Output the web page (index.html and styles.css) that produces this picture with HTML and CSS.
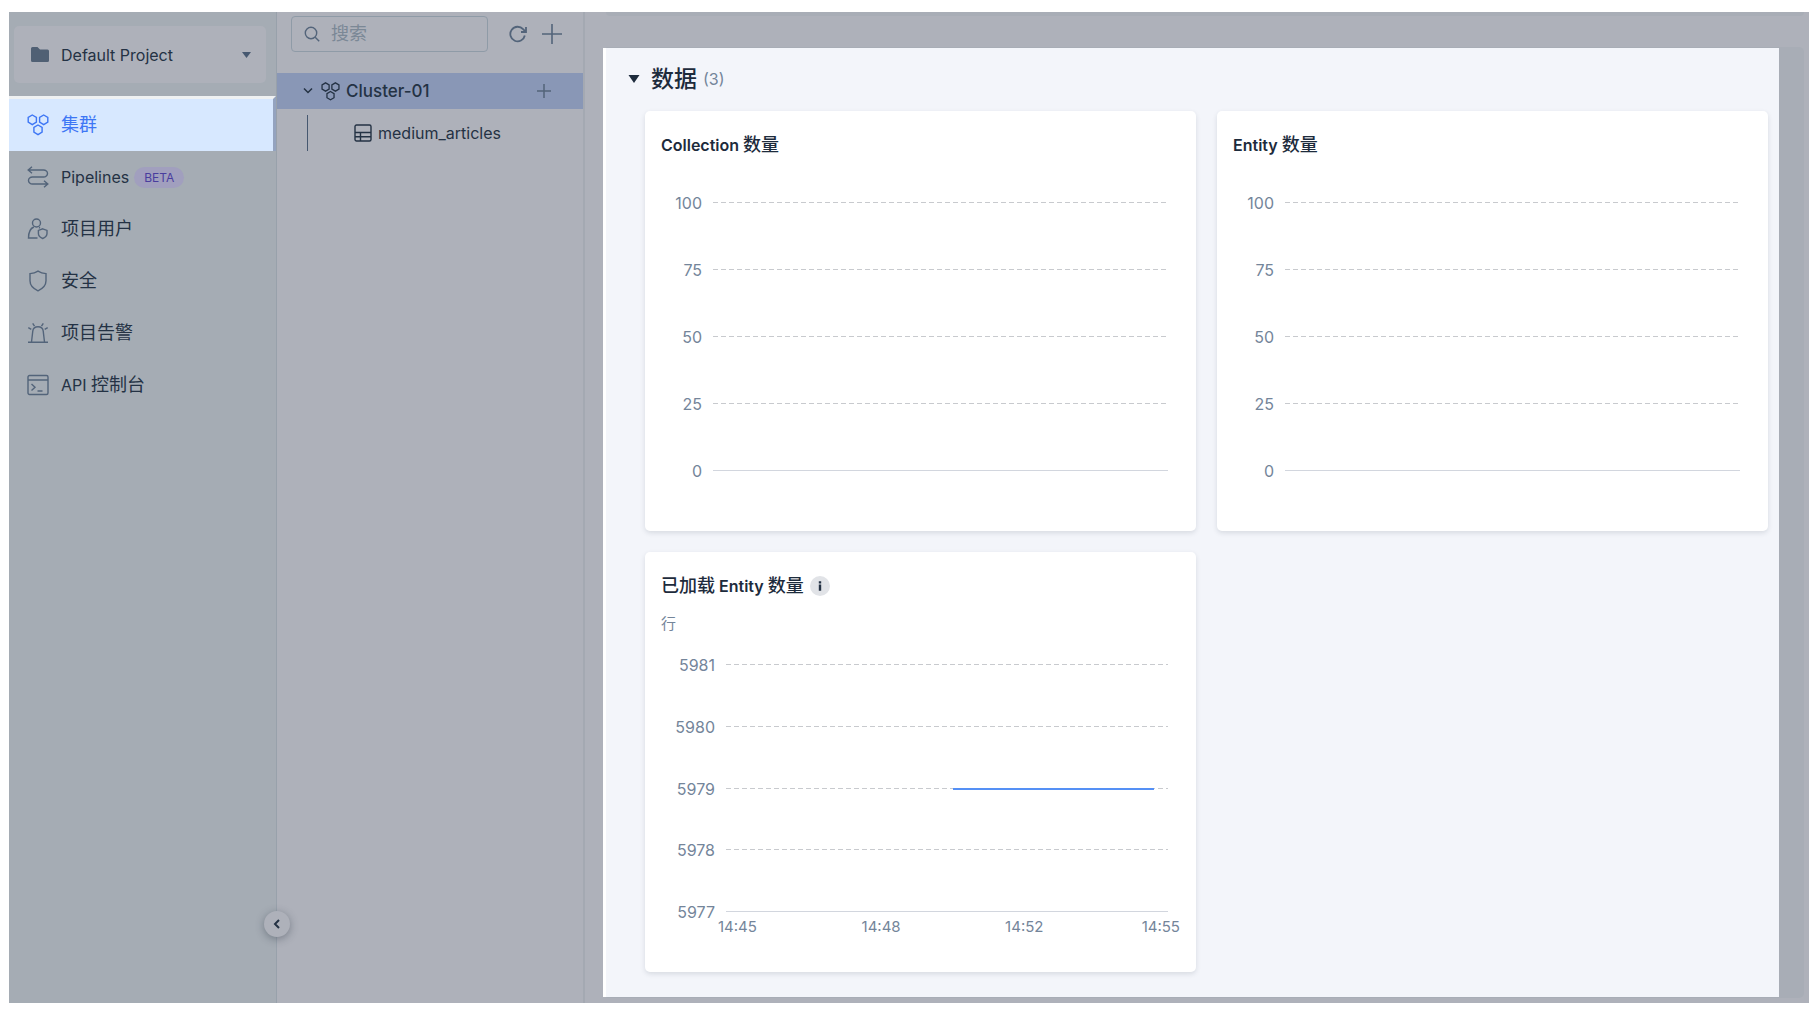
FILE: index.html
```html
<!DOCTYPE html>
<html lang="zh-CN">
<head>
<meta charset="utf-8">
<meta name="viewport" content="width=device-width, initial-scale=1">
<title>Cluster-01</title>
<link rel="stylesheet" href="styles.css">
</head>
<body>
<svg class="defs" aria-hidden="true">
  <symbol id="hexes" viewBox="0 0 22 22">
    <path d="M5.3 1 9.4 3.4v4.8L5.3 10.600 1.200 8.200V3.400zM16.700 1l4.100 2.400v4.800l-4.100 2.400-4.100-2.400V3.400zM11 11l4.100 2.400v4.800L11 20.600l-4.100-2.400v-4.800z"/>
  </symbol>
</svg>
<div class="app">
  <aside class="sidebar">
    <button class="project" type="button">
      <svg class="folder" viewBox="0 0 18 15"><path d="M0 1.500Q0 0 1.500 0h5L9 2.500h7.500Q18 2.500 18 4v9.500Q18 15 16.500 15h-15Q0 15 0 13.500z"/></svg>
      <span class="project-name">Default Project</span>
      <svg class="caret" viewBox="0 0 9 6"><path d="M0 0h9L4.500 6z"/></svg>
    </button>
    <nav class="nav">
      <a class="nav-item active" href="#clusters"><svg class="icon" viewBox="0 0 22 22"><use href="#hexes"/></svg><span class="cjk">集群</span></a>
      <a class="nav-item" href="#pipelines"><svg class="icon" viewBox="0 0 22 22"><path d="M5 .8 1.200 4 5 7.200M1.500 4h15a4 3.500 0 0 1 0 7h-11a4 3.500 0 0 0 0 7h15M17 14.800l3.800 3.200-3.800 3.200"/></svg><span>Pipelines</span><span class="badge">BETA</span></a>
      <a class="nav-item" href="#users"><svg class="icon" viewBox="0 0 22 22"><circle cx="9.500" cy="5" r="4"/><path d="M10.500 20H1.500c0-6 1.700-9.500 5.300-11M12 9.500l1 .5M15.700 10.800l4.300 1.600v3.200c0 2.300-1.800 3.900-4.300 4.900-2.500-1-4.300-2.600-4.300-4.900v-3.200z"/></svg><span class="cjk">项目用户</span></a>
      <a class="nav-item" href="#security"><svg class="icon" viewBox="0 0 22 22"><path d="M11 1.200c2.600 1.700 5.300 2.300 8 2.400v7.200c0 4.400-2.900 7.700-8 10-5.100-2.300-8-5.600-8-10V3.600c2.700-.1 5.400-.7 8-2.400z"/></svg><span class="cjk">安全</span></a>
      <a class="nav-item" href="#alerts"><svg class="icon" viewBox="0 0 22 22"><path d="M1 20.200h20M4.500 20l1.300-11q.5-4.300 5.200-4.300T16.200 9l1.300 11M1.300 5.600l3 1.700M20.700 5.600l-3 1.700M5.700 1.300l1.800 2.800M16.300 1.300l-1.800 2.800"/></svg><span class="cjk">项目告警</span></a>
      <a class="nav-item" href="#api"><svg class="icon" viewBox="0 0 22 22"><rect x="1" y="1.500" width="20" height="19" rx="1.500"/><path d="M1 6h20M4.500 10l3.500 3.300-3.500 3.300M10.500 17h5"/></svg><span>API <span class="cjk">控制台</span></span></a>
    </nav>
    <button class="collapse" type="button" aria-label="收起"><svg viewBox="0 0 8 10"><path d="M6 1 2 5l4 4"/></svg></button>
  </aside>

  <section class="tree">
    <div class="tools">
      <label class="search">
        <svg viewBox="0 0 16 16"><circle cx="7" cy="7" r="5.700"/><path d="m11.200 11.200 4 4"/></svg>
        <input type="search" placeholder="搜索" aria-label="搜索">
      </label>
      <button class="tool" type="button" aria-label="刷新"><svg class="refresh" viewBox="0 0 18 18"><path d="M15.800 10.500a7.300 7.300 0 1 1-1.700-6.300L16.500 6.700M17 2v5h-5"/></svg></button>
      <button class="tool" type="button" aria-label="新建"><svg class="plus" viewBox="0 0 20 20"><path d="M10 0v20M0 10h20"/></svg></button>
    </div>
    <div class="cluster">
      <svg class="chevron" viewBox="0 0 10 8"><path d="m1 1.500 4 4 4-4"/></svg>
      <svg class="hexes" viewBox="0 0 22 22"><use href="#hexes"/></svg>
      <a class="cluster-name" href="#cluster-01">Cluster-01</a>
      <button class="add" type="button" aria-label="新建 Collection"><svg viewBox="0 0 14 14"><path d="M7 0v14M0 7h14"/></svg></button>
    </div>
    <div class="children">
      <a class="collection" href="#medium_articles"><svg viewBox="0 0 18 18"><rect x="1" y="1" width="16" height="16" rx="1.500"/><path d="M1 8.500h16M1 12.700h16M6.500 8.500V17"/></svg>medium_articles</a>
    </div>
  </section>

  <main class="main">
    <div class="previous"></div>
    <div class="panel">
      <section class="metrics">
        <h2 class="heading"><button class="toggle" type="button"><svg viewBox="0 0 12 8"><path d="M.5 0h11L6 8z"/></svg><span class="heading-text">数据</span><span class="count">(3)</span></button></h2>
        <div class="cards">
          <article class="card">
            <h3 class="title">Collection <span class="cjk">数量</span></h3>
            <div class="plot">
              <div class="row"><span class="tick">100</span><i class="line"></i></div>
              <div class="row"><span class="tick">75</span><i class="line"></i></div>
              <div class="row"><span class="tick">50</span><i class="line"></i></div>
              <div class="row"><span class="tick">25</span><i class="line"></i></div>
              <div class="row"><span class="tick">0</span><i class="line base"></i></div>
            </div>
          </article>
          <article class="card">
            <h3 class="title">Entity <span class="cjk">数量</span></h3>
            <div class="plot">
              <div class="row"><span class="tick">100</span><i class="line"></i></div>
              <div class="row"><span class="tick">75</span><i class="line"></i></div>
              <div class="row"><span class="tick">50</span><i class="line"></i></div>
              <div class="row"><span class="tick">25</span><i class="line"></i></div>
              <div class="row"><span class="tick">0</span><i class="line base"></i></div>
            </div>
          </article>
          <article class="card loaded">
            <h3 class="title"><span class="cjk">已加载</span> Entity <span class="cjk">数量</span><span class="info"><svg viewBox="0 0 20 20"><path d="M8.800 5.300h2.400v2.200H8.800zM8.800 8.500h2.400v6.200H8.800z"/></svg></span></h3>
            <p class="unit">行</p>
            <div class="plot">
              <div class="row"><span class="tick">5981</span><i class="line"></i></div>
              <div class="row"><span class="tick">5980</span><i class="line"></i></div>
              <div class="row"><span class="tick">5979</span><i class="line"><b class="series" style="left:51.400%;width:45.500%"></b></i></div>
              <div class="row"><span class="tick">5978</span><i class="line"></i></div>
              <div class="row"><span class="tick">5977</span><i class="line base"></i></div>
            </div>
            <div class="times"><span>14:45</span><span>14:48</span><span>14:52</span><span>14:55</span></div>
          </article>
        </div>
      </section>
    </div>
  </main>
</div>
</body>
</html>
```
FILE: styles.css
```css
* { box-sizing: border-box; }

body {
  margin: 0;
  padding: 12px 9px;
  background: #fff;
  color: #243244;
  font: 16px/24px Inter, "Noto Sans CJK SC", sans-serif;
}

button { margin: 0; padding: 0; border: 0; background: none; color: inherit; font: inherit; cursor: pointer; }
a { color: inherit; text-decoration: none; }
svg { display: block; flex: none; fill: none; stroke: currentColor; }
.defs { display: none; }
.cjk { font-size: 18px; }

.app { display: flex; min-height: calc(100vh - 24px); background: #aeb1ba; }

/* sidebar */
.sidebar { position: relative; flex: none; width: 268px; border-right: 1px solid #98a1ab; background: #a5acb4; }
.project {
  display: flex;
  align-items: center;
  width: 252px;
  height: 57px;
  margin: 14px 5px 13px;
  padding: 0 15px 0 17px;
  border-radius: 5px;
  background: #aeb1ba;
}
.project-name { flex: 1; margin-left: 12px; text-align: left; }
.folder { width: 18px; height: 15px; fill: #506074; stroke: none; }
.caret { width: 9px; height: 6px; fill: #465870; stroke: none; }
.nav-item { display: flex; align-items: center; height: 52px; padding-left: 18px; }
.nav-item.active {
  height: 55px;
  border-top: 3px solid #eff1f2;
  border-right: 3px solid #94a3bf;
  background: #d7e8ff;
  color: #3d76f5;
}
.icon { width: 22px; height: 22px; margin-right: 12px; color: #53647a; stroke-width: 1.400; }
.active .icon { color: #3d76f5; }
.badge {
  height: 21px;
  margin-left: 5px;
  padding: 0 10px;
  border-radius: 11px;
  background: #a19fbe;
  color: #4a3d9e;
  font-size: 12px;
  line-height: 21px;
}
.collapse {
  position: absolute;
  right: -14px;
  bottom: 66px;
  z-index: 1;
  display: grid;
  place-items: center;
  width: 26px;
  height: 26px;
  border-radius: 50%;
  background: #aeb1ba;
  box-shadow: 0 2px 8px rgba(40, 50, 65, .4);
}
.collapse svg { width: 8px; height: 10px; stroke-width: 2; }

/* collection tree */
.tree { flex: none; width: 308px; border-right: 2px solid #a4a9b2; }
.tools { display: flex; align-items: center; padding: 4px 21px 21px 14px; color: #53647a; }
.search { display: flex; align-items: center; width: 197px; height: 36px; padding: 0 12px; border: 1px solid #8f9ba7; border-radius: 4px; }
.search svg { width: 16px; height: 16px; stroke-width: 1.400; }
.search input {
  flex: 1;
  min-width: 0;
  margin-left: 11px;
  padding: 0;
  border: 0;
  outline: 0;
  background: none;
  color: #243244;
  font: inherit;
  font-size: 18px;
}
.search input::placeholder { color: #7b8896; }
.tool { margin-left: 15px; }
.search + .tool { margin-left: 21px; }
.refresh { width: 18px; height: 18px; stroke-width: 1.800; }
.plus { width: 20px; height: 20px; stroke-width: 1.600; }
.cluster { display: flex; align-items: center; height: 36px; padding: 0 32px 0 26px; background: #8997b6; }
.chevron { width: 10px; height: 8px; margin-right: 8px; stroke-width: 1.500; }
.hexes { width: 19px; height: 19px; stroke-width: 1.500; }
.cluster-name { flex: 1; margin-left: 6px; font-size: 17px; font-weight: 500; }
.add svg { width: 14px; height: 14px; color: #53647a; stroke-width: 1.500; }
.children { margin: 6px 0 0 30px; border-left: 1px solid #465870; }
.collection { display: flex; align-items: center; height: 36px; padding-left: 46px; }
.collection svg { width: 18px; height: 18px; margin-right: 6px; stroke-width: 1.400; }

/* monitoring panel */
.main { display: flex; flex: 1; flex-direction: column; min-width: 0; padding: 0 5px 5px 18px; }
.previous { height: 4px; margin: 0 0 31px 3px; border-radius: 0 0 4px 4px; background: #a8adb6; }
.panel { flex: 1; padding: 1px 25px 1px 0; border-radius: 5px; background: #a8adb6; }
.metrics { height: 100%; padding: 0 11px 25px 39px; border-left: 3px solid #fff; background: #f3f5fa; }
.heading { margin: 0 0 0 -17px; font-weight: 400; }
.toggle { display: flex; align-items: center; height: 63px; padding-bottom: 2px; color: #1d2b3c; }
.toggle svg { width: 12px; height: 8px; fill: currentColor; stroke: none; }
.heading-text { margin-left: 11px; font-size: 23px; font-weight: 500; }
.count { margin-left: 6px; color: #74859a; font-size: 16px; }
.cards { display: grid; grid-template-columns: 1fr 1fr; gap: 21px; }
.card { height: 420px; padding: 22px 28px 0 16px; border-radius: 5px; background: #fff; box-shadow: 0 2px 5px rgba(30, 45, 65, .13); }
.title { display: flex; align-items: center; height: 24px; margin: 0; color: #1d2b3c; font-size: 16px; font-weight: 600; white-space: pre; }
.title .cjk { font-weight: 500; }
.info { margin-left: 6px; border-radius: 50%; background: #e1e3e7; }
.info svg { width: 20px; height: 20px; fill: #243244; stroke: none; }
.unit { margin: 14px 0 0; color: #74859a; font-size: 15px; }
.plot { display: flex; flex-direction: column; justify-content: space-between; height: 280px; margin-top: 40px; }
.row { display: flex; align-items: center; gap: 11px; height: 12px; }
.tick { width: 41px; color: #74859a; font-size: 16px; line-height: 12px; text-align: right; }
.line { position: relative; flex: 1; height: 1px; margin-bottom: 1px; background: repeating-linear-gradient(90deg, #c8cace 0 5px, transparent 5px 8px); }
.line.base { background: #d2d6de; }
.series { position: absolute; top: 0; height: 2px; background: #5590f5; }
.loaded .plot { height: 259px; margin-top: 23px; }
.loaded .tick { width: 54px; }
.times {
  display: grid;
  grid-template-columns: 143fr 143fr 136fr auto;
  margin: 0 -12px 0 57px;
  color: #74859a;
  font-size: 15px;
  line-height: 18px;
}
```
